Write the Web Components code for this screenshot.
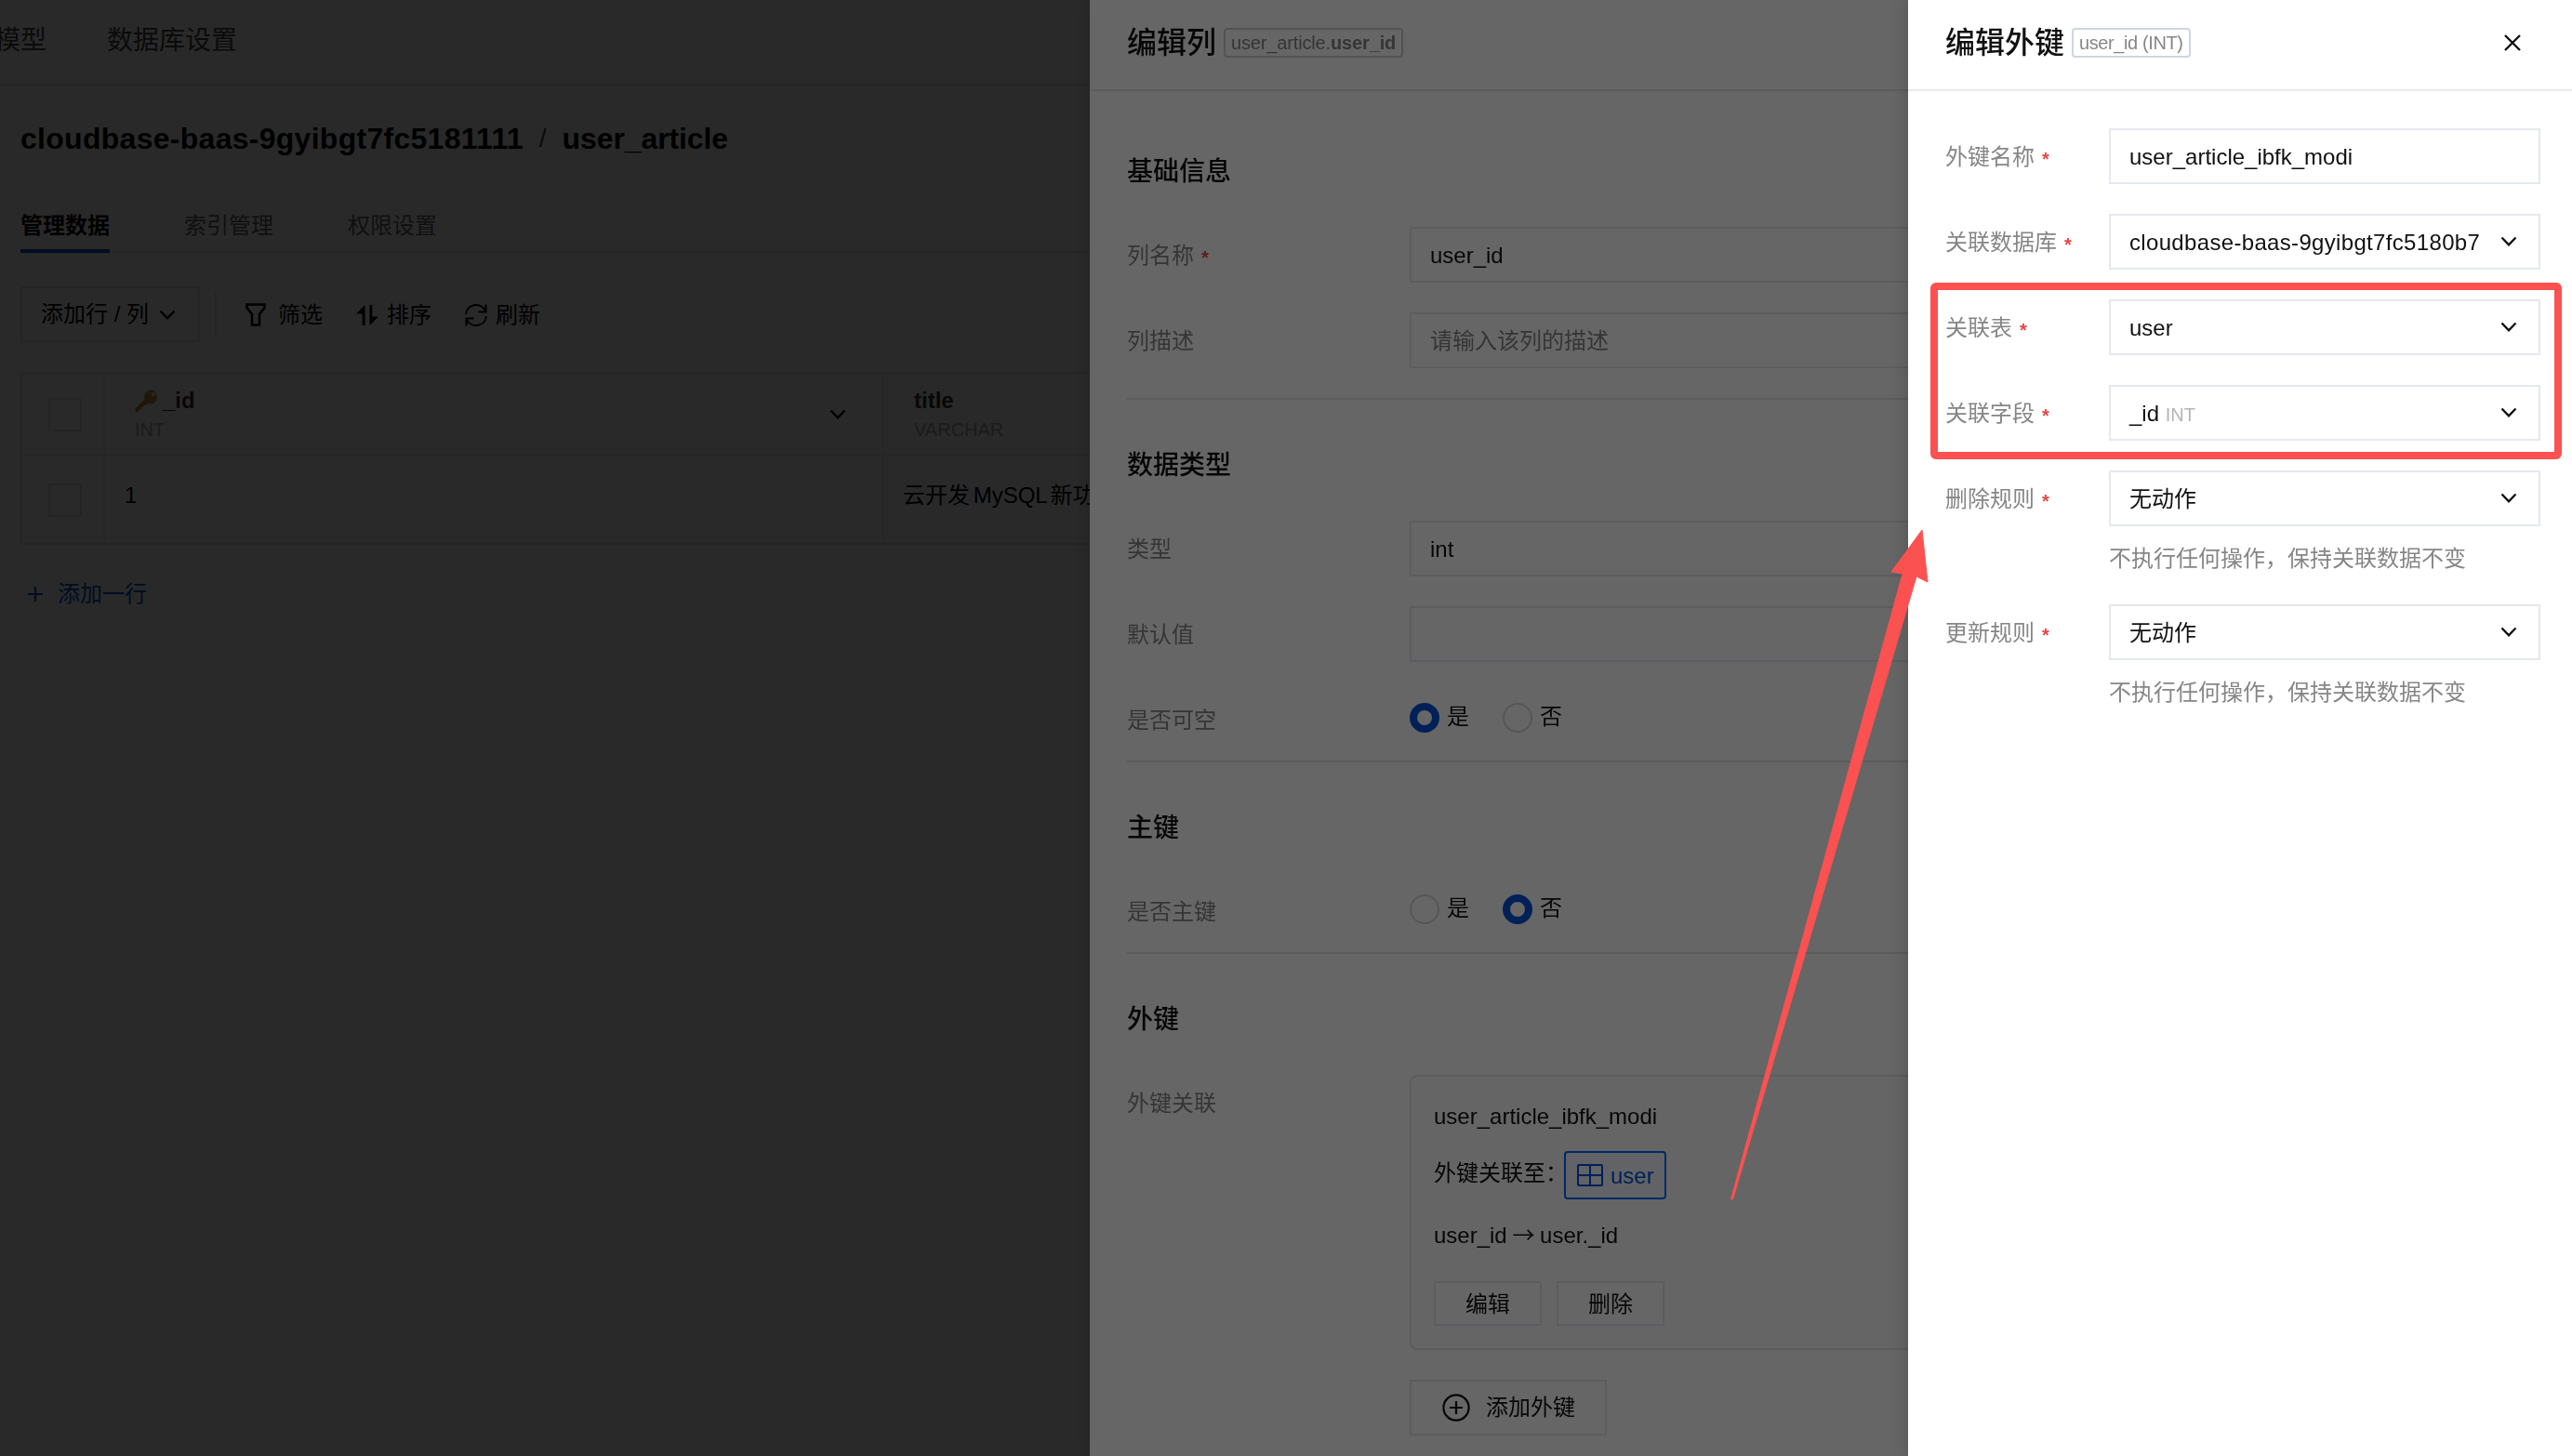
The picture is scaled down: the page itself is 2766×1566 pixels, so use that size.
<!DOCTYPE html>
<html lang="zh-CN">
<head>
<meta charset="utf-8">
<title>user_article</title>
<style>
  * { box-sizing: border-box; }
  body {
    margin: 0;
    width: 2766px;
    height: 1566px;
    overflow: hidden;
    background: #fff;
    color: #111;
    font: 24px/40px "Liberation Sans", "Noto Sans CJK SC", sans-serif;
    --line: #e5e8ef;
    --blue: #0052d9;
    --grey: #868686;
  }
  .mask { position: fixed; inset: 0; background: rgba(0, 0, 0, .6); }
</style>
</head>
<body>
  <data-page></data-page>

  <div class="mask"></div>
  <side-drawer style="--width: 1594px">
    <span slot="title">编辑列</span>
    <span slot="tag">user_article.<b>user_id</b></span>
    <column-form></column-form>
  </side-drawer>

  <div class="mask"></div>
  <side-drawer style="--width: 714px; --tag: #cfd5e0" closable>
    <span slot="title">编辑外键</span>
    <span slot="tag" style="letter-spacing:-.4px">user_id (INT)</span>
    <foreign-key-form></foreign-key-form>
  </side-drawer>

  <mark-layer></mark-layer>

<script>
const ICONS = {
  chevron: [18, 11, '<path d="M1.5 1.5 9 9.3l7.5-7.8" fill="none" stroke="currentColor" stroke-width="2.4"/>'],
  close: [18, 18, '<path d="M1 1l16 16M17 1 1 17" fill="none" stroke="currentColor" stroke-width="2.4"/>'],
  filter: [22, 25, '<path d="M1.5 1.5h19v3.500l-5.500 7v11.500H7V12L1.500 5z" fill="none" stroke="currentColor" stroke-width="2.6"/>'],
  sort: [24, 22, '<path d="M9.5 0v22H6.7V9.5H0zM14.5 22V0h2.8v12.5H24z" fill="currentColor"/>'],
  refresh: [26, 26, '<path d="M2 12A11 11 0 0 1 22.5 7.5M24 14A11 11 0 0 1 3.5 18.5M23.5 1.5v8h-8M2.5 24.500v-8h8" fill="none" stroke="currentColor" stroke-width="2"/>'],
  plus: [16, 16, '<path d="M8 0v16M0 8h16" stroke="currentColor" stroke-width="2.2"/>'],
  circlePlus: [30, 30, '<circle cx="15" cy="15" r="13.600" fill="none" stroke="currentColor" stroke-width="2.200"/><path d="M15 8v14M8 15h14" stroke="currentColor" stroke-width="2.200"/>'],
  table: [28, 24, '<path d="M2 1h24q1 0 1 1v20q0 1-1 1H2q-1 0-1-1V2q0-1 1-1zM14 1v22M1 12h26" fill="none" stroke="currentColor" stroke-width="2"/>'],
  key: [25, 25, '<path d="M11 10 .5 20.500V23q1.500 1.500 3.500 1v-2.500h2.500V19H9v-2.500h2.500L15 14.500z" fill="#b8862e"/><ellipse cx="17" cy="8" rx="7" ry="7.500" fill="#c0903a"/><circle cx="20" cy="5" r="2.200" fill="#f5ecd8"/>'],
};

class UiIcon extends HTMLElement {
  connectedCallback() {
    const [w, h, body] = ICONS[this.getAttribute('name')];
    this.attachShadow({ mode: 'open' }).innerHTML = `
      <style>:host { display: inline-flex; flex: none; } svg { display: block; }</style>
      <svg width="${w}" height="${h}" viewBox="0 0 ${w} ${h}">${body}</svg>`;
  }
}

class DataPage extends HTMLElement {
  constructor() {
    super();
    this.attachShadow({ mode: 'open' }).innerHTML = `
    <style>
      * { box-sizing: border-box; }
      :host { display: block; width: 2766px; height: 1566px; overflow: hidden; color: #000; }
      header {
        display: flex;
        gap: 65px;
        height: 92px;
        margin-left: -6px;
        padding-bottom: 3px;
        align-items: center;
        border-bottom: 2px solid #e7e7e7;
        font-size: 28px;
        color: #444;
      }
      main { padding-left: 22px; }
      h1 {
        display: flex;
        gap: 17px;
        margin: 0;
        height: 112px;
        padding-top: 2px;
        align-items: center;
        font-size: 32px;
      }
      h1 span { letter-spacing: -.1px; }
      h1 span:first-child { letter-spacing: .28px; }
      h1 i { font: 28px "Liberation Sans"; color: #444; }
      nav { display: flex; gap: 80px; height: 68px; border-bottom: 2px solid #e7e7e7; }
      nav a { height: 68px; padding-top: 19px; color: #666; }
      nav a.on { font-weight: bold; color: #000; border-bottom: 4px solid var(--blue); }
      .tools { display: flex; align-items: center; height: 60px; margin: 36px 0 32px; }
      .add {
        display: flex;
        align-items: center;
        gap: 11px;
        width: 193px;
        height: 60px;
        padding: 0 0 0 20px;
        border: 2px solid #e7e7e7;
      }
      hr { width: 2px; height: 48px; margin: 0 31px 0 16px; border: 0; background: #e7e7e7; }
      .tool { display: flex; align-items: center; padding-top: 1px; }
      .grid {
        display: grid;
        grid-template-columns: 89px 838px 1fr;
        grid-template-rows: 88px 94px;
        border: 2px solid #e7e7e7;
        width: 2744px;
      }
      .grid > div { border-right: 2px solid #ececec; }
      .head { background: #fbfbfb; border-bottom: 2px solid #e7e7e7; }
      .check { display: flex; align-items: center; padding: 2px 0 0 28px; }
      .check::after { content: ""; width: 32px; height: 32px; border: 2px solid #dcdcdc; }
      .col { display: flex; align-items: center; justify-content: space-between; padding: 0 39px 0 32px; }
      .col > div { padding-top: 2px; }
      .name { display: flex; align-items: center; gap: 5px; font-weight: bold; line-height: 32px; color: #333; }
      small { display: block; font-size: 20px; line-height: 30px; color: #aaa; }
      .cell { padding: 23px 0 0 21px; }
      .more { display: flex; align-items: center; gap: 16px; margin: 33px 0 0 8px; color: var(--blue); }
    </style>
    <header><span>模型</span><span>数据库设置</span></header>
    <main>
      <h1><span>cloudbase-baas-9gyibgt7fc5181111</span><i>/</i><span>user_article</span></h1>
      <nav><a class="on">管理数据</a><a>索引管理</a><a>权限设置</a></nav>
      <div class="tools">
        <div class="add"><span>添加行 / 列</span><ui-icon name="chevron"></ui-icon></div>
        <hr>
        <div class="tool" style="gap:13px;margin-right:36px"><ui-icon name="filter"></ui-icon>筛选</div>
        <div class="tool" style="gap:9px;margin-right:35px"><ui-icon name="sort"></ui-icon>排序</div>
        <div class="tool" style="gap:8px"><ui-icon name="refresh"></ui-icon>刷新</div>
      </div>
      <div class="grid">
        <div class="head check"></div>
        <div class="head col">
          <div><div class="name"><ui-icon name="key"></ui-icon>_id</div><small>INT</small></div>
          <ui-icon name="chevron"></ui-icon>
        </div>
        <div class="head col"><div><div class="name">title</div><small>VARCHAR</small></div></div>
        <div class="check"></div>
        <div class="cell">1</div>
        <div class="cell" style="padding-left:20px;word-spacing:-3px">云开发 MySQL 新功</div>
      </div>
      <div class="more"><ui-icon name="plus"></ui-icon>添加一行</div>
    </main>`;
  }
}

class SideDrawer extends HTMLElement {
  constructor() {
    super();
    this.attachShadow({ mode: 'open' });
  }

  connectedCallback() {
    this.shadowRoot.innerHTML = `
    <style>
      * { box-sizing: border-box; }
      :host {
        display: block;
        position: fixed;
        top: 0;
        right: 0;
        bottom: 0;
        width: var(--width);
        background: #fff;
        box-shadow: 0 0 20px rgba(0, 0, 0, .2);
      }
      header {
        display: flex;
        align-items: center;
        height: 98px;
        padding: 0 55px 4px 40px;
        border-bottom: 2px solid #e7e9f0;
      }
      .title { font-size: 32px; font-weight: 500; }
      .tag {
        height: 32px;
        margin-left: 8px;
        padding: 0 6px;
        border: 2px solid var(--tag, #d0d0d0);
        border-radius: 4px;
        font-size: 20px;
        line-height: 29px;
        letter-spacing: -.15px;
        color: var(--grey);
      }
      ui-icon { margin-left: auto; }
    </style>
    <header>
      <div class="title"><slot name="title"></slot></div>
      <div class="tag"><slot name="tag"></slot></div>
      ${this.hasAttribute('closable') ? '<ui-icon name="close"></ui-icon>' : ''}
    </header>
    <slot></slot>`;
  }
}

class FormRow extends HTMLElement {
  constructor() {
    super();
    this.attachShadow({ mode: 'open' });
  }

  connectedCallback() {
    this.shadowRoot.innerHTML = `
    <style>
      :host { display: flex; margin-bottom: 32px; }
      .label {
        flex: none;
        width: var(--label, 304px);
        height: 42px;
        line-height: 61px;
        color: var(--grey);
      }
      .label i { margin-left: 8px; font-style: normal; font-size: 20px; font-weight: bold; color: #e54545; position: relative; top: 1px; }
      .content { flex: 1; min-width: 0; }
    </style>
    <div class="label">${this.getAttribute('label')}${this.hasAttribute('required') ? '<i>*</i>' : ''}</div>
    <div class="content"><slot></slot></div>`;
  }
}

class FieldBox extends HTMLElement {
  constructor() {
    super();
    this.attachShadow({ mode: 'open' });
  }

  connectedCallback() {
    this.shadowRoot.innerHTML = `
    <style>
      :host {
        display: flex;
        box-sizing: border-box;
        align-items: center;
        justify-content: space-between;
        height: 60px;
        padding: 0 23px 0 20px;
        border: 2px solid var(--line);
      }
      :host([placeholder]) { color: var(--grey); }
      span { padding-top: 2px; }
      ui-icon { margin-bottom: 1px; }
    </style>
    <span>${this.getAttribute('placeholder') || ''}<slot></slot></span>
    ${this.hasAttribute('select') ? '<ui-icon name="chevron"></ui-icon>' : ''}`;
  }
}

class YesNo extends HTMLElement {
  constructor() {
    super();
    this.attachShadow({ mode: 'open' });
  }

  connectedCallback() {
    const value = this.getAttribute('value');
    this.shadowRoot.innerHTML = `
    <style>
      :host { display: flex; gap: 36px; height: 42px; padding-top: 12px; box-sizing: border-box; }
      label { display: flex; gap: 8px; height: 32px; line-height: 30px; }
      i { box-sizing: border-box; width: 32px; height: 32px; border: 2px solid #d5d8de; border-radius: 50%; }
      .on { border: 8px solid var(--blue); }
    </style>
    ${['是', '否'].map(t => `<label><i class="${t === value ? 'on' : ''}"></i>${t}</label>`).join('')}`;
  }
}

class FormSection extends HTMLElement {
  constructor() {
    super();
    this.attachShadow({ mode: 'open' });
  }

  connectedCallback() {
    this.shadowRoot.innerHTML = `
    <style>
      :host { display: block; border-bottom: 2px solid #e3e3e3; }
      :host(:last-of-type) { border: 0; }
      h3 { margin: 0; height: 130px; padding-top: 50px; box-sizing: border-box; font-size: 28px; line-height: 42px; font-weight: 500; }
    </style>
    <h3>${this.getAttribute('heading')}</h3>
    <slot></slot>`;
  }
}

class ForeignKeyCard extends HTMLElement {
  constructor() {
    super();
    this.attachShadow({ mode: 'open' }).innerHTML = `
    <style>
      * { box-sizing: border-box; }
      :host {
        display: block;
        box-sizing: border-box;
        height: 296px;
        padding: 23px 24px;
        border: 2px solid #e5e5e8;
        border-radius: 8px;
        background: #fcfcfc;
      }
      .to { display: flex; height: 52px; margin: 17px 0 17px; line-height: 48px; }
      .table {
        display: flex;
        align-items: center;
        gap: 8px;
        width: 110px;
        height: 52px;
        margin-left: -4px;
        padding-left: 12px;
        border: 2px solid #0067ff;
        border-radius: 4px;
        background: #f2f8ff;
        color: var(--blue);
      }
      .table span { padding-top: 2px; }
      .arrow { font-family: "Noto Sans CJK SC"; }
      .buttons { display: flex; gap: 16px; margin-top: 31px; }
      .buttons div { width: 116px; height: 48px; border: 2px solid var(--line); background: #fff; text-align: center; line-height: 45px; }
    </style>
    <div>user_article_ibfk_modi</div>
    <div class="to">外键关联至：<div class="table"><ui-icon name="table"></ui-icon><span>user</span></div></div>
    <div style="height:40px;word-spacing:-1px">user_id <span class="arrow">→</span> user._id</div>
    <div class="buttons"><div>编辑</div><div>删除</div></div>`;
  }
}

class ColumnForm extends HTMLElement {
  constructor() {
    super();
    this.attachShadow({ mode: 'open' }).innerHTML = `
    <style>
      :host { display: block; padding: 16px 40px 0; }
      .add {
        display: flex;
        box-sizing: border-box;
        align-items: center;
        gap: 17px;
        width: 212px;
        height: 60px;
        margin-top: 32px;
        padding-left: 33px;
        border: 2px solid var(--line);
      }
    </style>
    <form-section heading="基础信息">
      <form-row label="列名称" required><field-box>user_id</field-box></form-row>
      <form-row label="列描述"><field-box placeholder="请输入该列的描述"></field-box></form-row>
    </form-section>
    <form-section heading="数据类型">
      <form-row label="类型"><field-box select>int</field-box></form-row>
      <form-row label="默认值"><field-box></field-box></form-row>
      <form-row label="是否可空"><yes-no value="是"></yes-no></form-row>
    </form-section>
    <form-section heading="主键">
      <form-row label="是否主键"><yes-no value="否"></yes-no></form-row>
    </form-section>
    <form-section heading="外键">
      <form-row label="外键关联">
        <foreign-key-card></foreign-key-card>
        <div class="add"><ui-icon name="circlePlus"></ui-icon>添加外键</div>
      </form-row>
    </form-section>`;
  }
}

class ForeignKeyForm extends HTMLElement {
  constructor() {
    super();
    this.attachShadow({ mode: 'open' }).innerHTML = `
    <style>
      :host { display: block; padding: 40px 34px 0 40px; --label: 176px; }
      small { font-size: 20px; color: #b5b5b5; }
      p { margin: 15px 0 -3px; color: var(--grey); }
    </style>
    <form-row label="外键名称" required><field-box>user_article_ibfk_modi</field-box></form-row>
    <form-row label="关联数据库" required><field-box select style="letter-spacing:.33px">cloudbase-baas-9gyibgt7fc5180b7</field-box></form-row>
    <form-row label="关联表" required><field-box select>user</field-box></form-row>
    <form-row label="关联字段" required><field-box select>_id <small>INT</small></field-box></form-row>
    <form-row label="删除规则" required>
      <field-box select>无动作</field-box>
      <p>不执行任何操作，保持关联数据不变</p>
    </form-row>
    <form-row label="更新规则" required>
      <field-box select>无动作</field-box>
      <p>不执行任何操作，保持关联数据不变</p>
    </form-row>`;
  }
}

// red frame and arrow drawn over everything
class MarkLayer extends HTMLElement {
  constructor() {
    super();
    this.attachShadow({ mode: 'open' }).innerHTML = `
    <style>:host { display: block; position: fixed; inset: 0; } svg { display: block; }</style>
    <svg width="2766" height="1566" viewBox="0 0 2766 1566">
      <rect x="2080" y="308" width="671" height="182" rx="2" fill="none" stroke="#fb5151" stroke-width="8"/>
      <path d="M2067 570 2073 626 2061 620 1863.500 1290H1861.500L2046 617 2034 615z" fill="#fb5151" stroke="#fb5151" stroke-linejoin="round"/>
    </svg>`;
  }
}

customElements.define('ui-icon', UiIcon);
customElements.define('data-page', DataPage);
customElements.define('side-drawer', SideDrawer);
customElements.define('form-row', FormRow);
customElements.define('field-box', FieldBox);
customElements.define('yes-no', YesNo);
customElements.define('form-section', FormSection);
customElements.define('foreign-key-card', ForeignKeyCard);
customElements.define('column-form', ColumnForm);
customElements.define('foreign-key-form', ForeignKeyForm);
customElements.define('mark-layer', MarkLayer);
</script>
</body>
</html>
